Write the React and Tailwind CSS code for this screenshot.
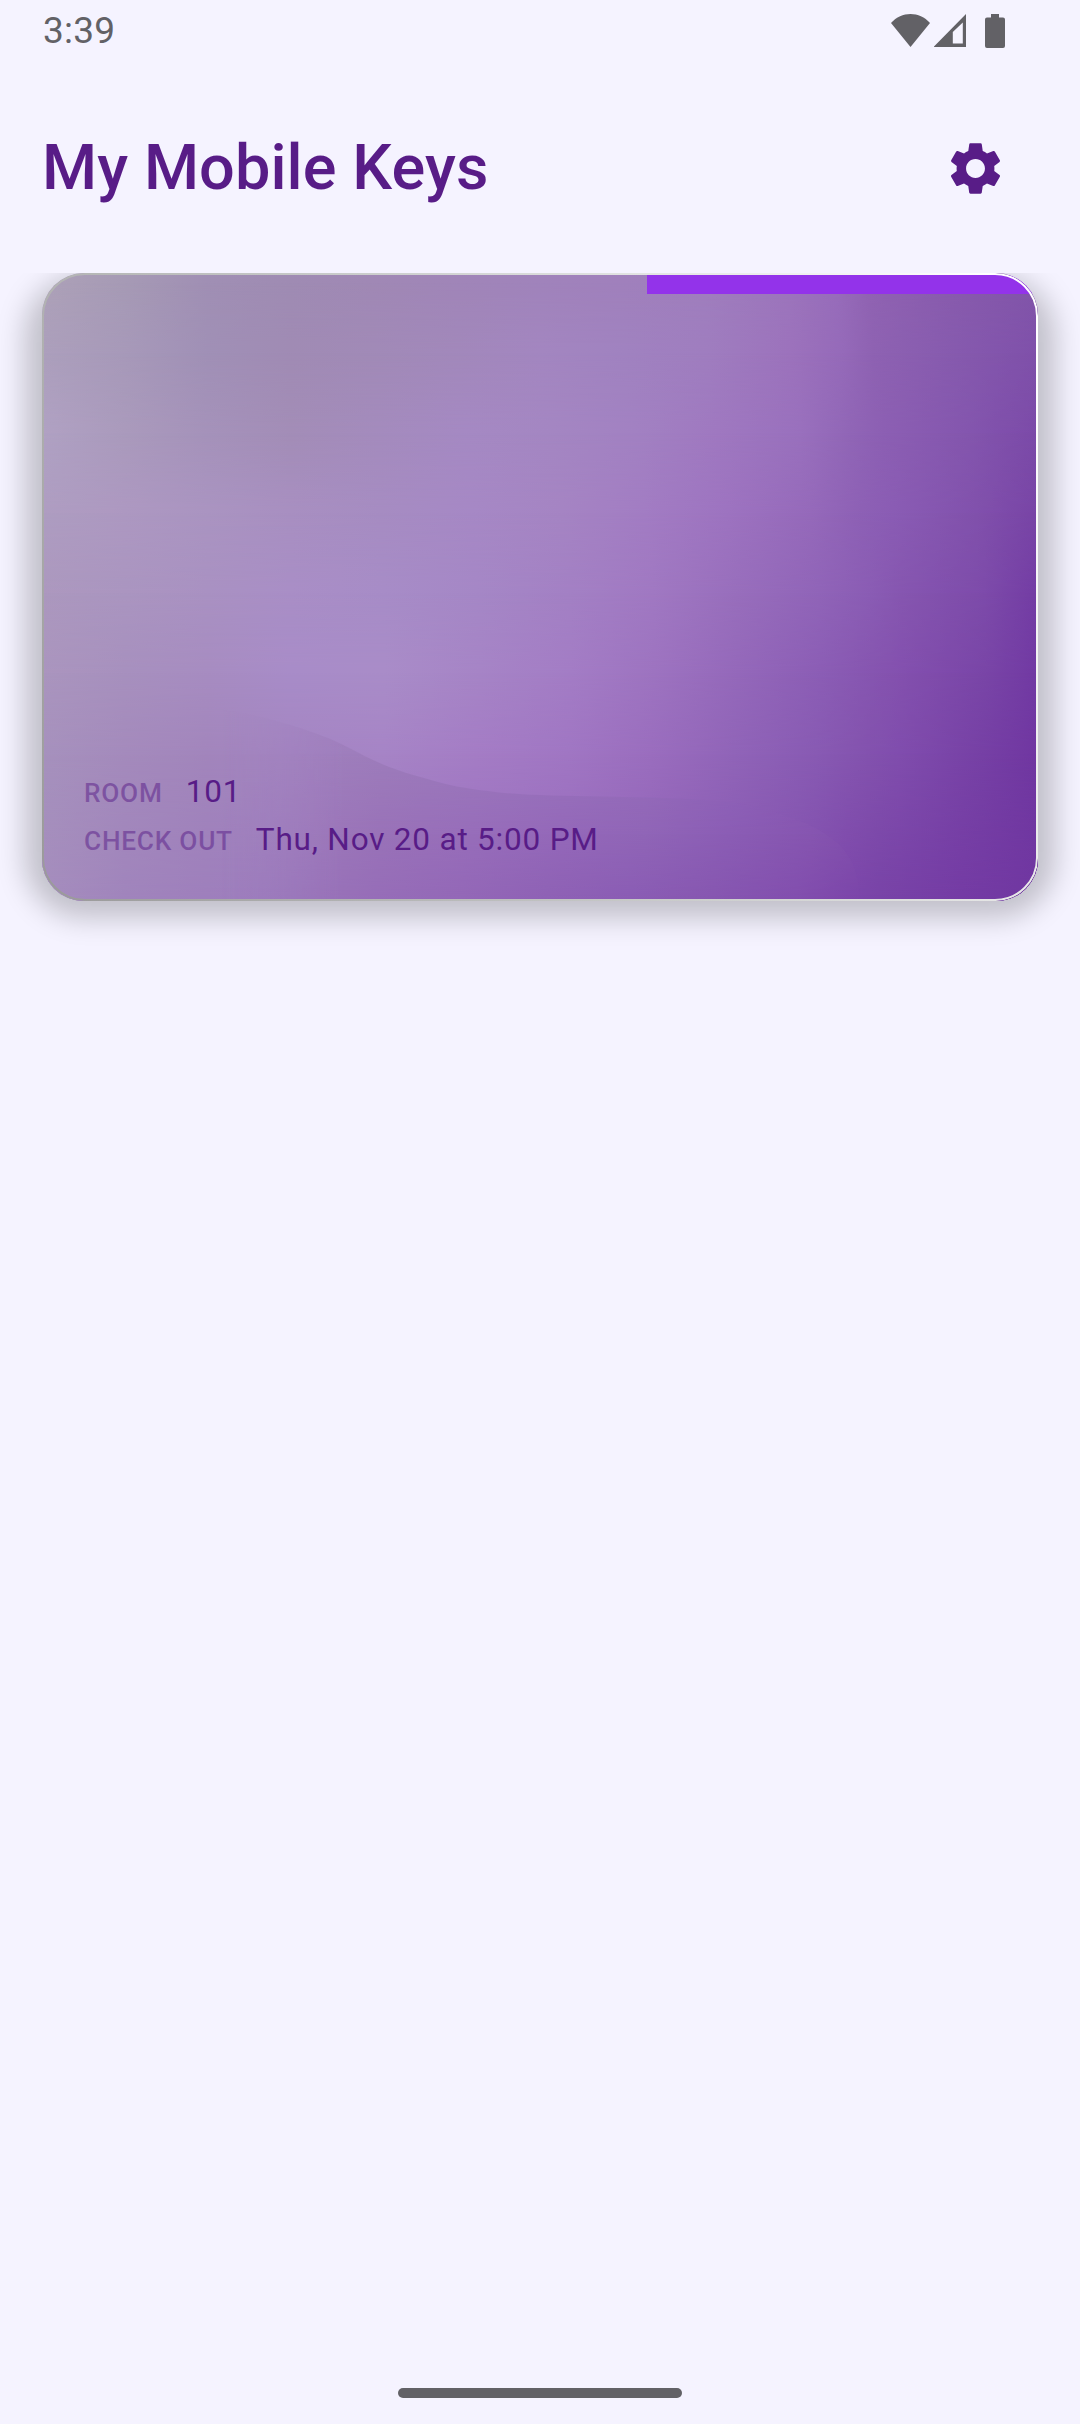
import { MdSettings } from "react-icons/md";

const COLS = [0, 83, 165, 248, 331, 414, 496, 579, 662, 745, 796, 827, 910, 996];

/* Each row: y, horizontal shift of the right-hand stops, colours. */
const UPPER = [
  [10, 0, ["#ada1b8", "#a69ab5", "#a08fb4", "#9f8bb3", "#a088b5", "#a085b8", "#a083bb", "#a080bc", "#9f7ebd", "#9c75bc", "#976cba", "#9063b2", "#885bad", "#8155a9"]],
  [80, 4, ["#ac9fbc", "#a799b9", "#a090b6", "#a08bb4", "#a18ab7", "#a288bb", "#a386c0", "#a082c0", "#9f7dbf", "#9c72bc", "#956ab9", "#8e62b2", "#865aae", "#7f50aa"]],
  [160, 14, ["#b0a1c3", "#aa9abc", "#a592ba", "#a38db7", "#a48bbd", "#a589c3", "#a486c2", "#a281c2", "#9f78c0", "#9970bd", "#9065b6", "#8c5fb3", "#8456ae", "#7b4aa8"]],
  [240, 24, ["#ae9dc1", "#ad98c1", "#aa94c1", "#a88fc1", "#a68cc2", "#a688c5", "#a584c3", "#a27cc3", "#9d73c0", "#9569ba", "#8d60b5", "#8a5cb4", "#8151ac", "#7844a6"]],
  [320, 32, ["#ac98be", "#aa95c0", "#a991c2", "#a98ec6", "#a78cc7", "#a587c6", "#a380c4", "#a078c2", "#986ebc", "#9064b8", "#8a5cb4", "#8656b0", "#7d4baa", "#733ca4"]],
  [400, 34, ["#aa95be", "#a790be", "#a78cc1", "#a88cc8", "#a98cc8", "#a684c6", "#a37cc5", "#9d73c0", "#9468ba", "#8b5db5", "#8655b0", "#8350ae", "#7945a7", "#7139a3"]],
  [481, 30, ["#a691bd", "#a48abc", "#a285bc", "#a485c2", "#a684c6", "#a47cc5", "#a076c3", "#9a6dbe", "#9064b8", "#885ab3", "#8352ae", "#804dad", "#7640a5", "#7036a1"]],
  [628, 10, ["#a58dbd", "#a084bc", "#9e7fbc", "#9d7cbf", "#9c76bf", "#9b70bf", "#986abd", "#9263b9", "#8a5ab3", "#8250ae", "#7c46aa", "#7843a7", "#743ba4", "#7037a1"]],
];

const LOWER = [
  [420, 30, ["#a994be", "#a68ebe", "#a589c0", "#a487c2", "#a080bf", "#9e7bbd", "#9b75bc", "#986fbb", "#9267b9", "#8b5db5", "#8655b0", "#8350ae", "#7945a7", "#7139a3"]],
  [481, 30, ["#a691bd", "#a48abc", "#a285bc", "#a080bd", "#9d7cbb", "#9b78bb", "#9873bb", "#966dba", "#8f64b8", "#885ab3", "#8352ae", "#804dad", "#7640a5", "#7036a1"]],
  [561, 24, ["#a58fbd", "#a286bb", "#a081bb", "#9d7aba", "#9972b8", "#976dba", "#9468b9", "#9065b7", "#8b5db5", "#8655b0", "#814eac", "#7b48a9", "#743ca5", "#7036a1"]],
  [628, 10, ["#a58dbd", "#a084bc", "#9e7fbc", "#9975b8", "#966db8", "#9367b7", "#8e61b5", "#8a5cb4", "#8656b0", "#824eae", "#7c46aa", "#7843a7", "#743ba4", "#7037a1"]],
];

const stopOffset = (k, shift) => {
  const weight = k === COLS.length - 1 ? 0 : Math.min(1, Math.max(0, (COLS[k] - 248) / 248));
  return (COLS[k] + shift * weight) / 996;
};

const WAVE =
  "M100 436 C150 434 185 436 210 442 C250 451 270 459 286 465 C305 473 318 481 331 487 C348 495 363 500 382 505 C405 512 425 516 446 518 C466 521 488 522 509 522.500 L605 524.500 C630 525 655 526 675 528 C697 530 716 534 732 539 C750 545 765 550 777 557 C790 565 799 572 805 581 C814 594 817 608 818 628 L100 628 Z";

/* A colour mesh: horizontal gradients that fade into one another from row to row. */
function Mesh({ id, rows }) {
  return (
    <g>
      <defs>
        {rows.map(([y, shift, colors], i) => {
          const from = i === 0 ? y - 1 : rows[i - 1][0];
          return (
            <g key={y}>
              <linearGradient id={`${id}-c${i}`} gradientUnits="userSpaceOnUse" x1="0" y1="0" x2="996" y2="0">
                {colors.map((c, k) => (
                  <stop key={k} offset={stopOffset(k, shift)} stopColor={c} />
                ))}
              </linearGradient>
              <linearGradient id={`${id}-f${i}`} gradientUnits="userSpaceOnUse" x1="0" y1={from} x2="0" y2={y}>
                <stop offset="0" stopColor="#fff" stopOpacity={i === 0 ? 1 : 0} />
                <stop offset="1" stopColor="#fff" />
              </linearGradient>
              <mask id={`${id}-m${i}`} maskUnits="userSpaceOnUse" x="0" y="0" width="996" height="628">
                <rect width="996" height="628" fill={`url(#${id}-f${i})`} />
              </mask>
            </g>
          );
        })}
      </defs>
      {rows.map(([y], i) => (
        <rect key={y} width="996" height="628" fill={`url(#${id}-c${i})`} mask={`url(#${id}-m${i})`} />
      ))}
    </g>
  );
}

function CardArt() {
  return (
    <svg className="absolute inset-0" width="996" height="628" viewBox="0 0 996 628">
      <defs>
        <linearGradient id="wave-fade" gradientUnits="userSpaceOnUse" x1="180" y1="0" x2="300" y2="0">
          <stop offset="0" stopColor="#fff" stopOpacity="0" />
          <stop offset="1" stopColor="#fff" />
        </linearGradient>
        <mask id="wave" maskUnits="userSpaceOnUse" x="0" y="0" width="996" height="628">
          <path d={WAVE} fill="url(#wave-fade)" />
        </mask>
        <linearGradient id="edge" gradientUnits="userSpaceOnUse" x1="0" y1="628" x2="1000" y2="103">
          <stop offset="0" stopColor="#999999" />
          <stop offset="0.5" stopColor="#cacccb" />
          <stop offset="1" stopColor="#ffffff" />
        </linearGradient>
      </defs>
      <Mesh id="upper" rows={UPPER} />
      <g mask="url(#wave)">
        <Mesh id="lower" rows={LOWER} />
      </g>
      <rect x="605" y="2" width="391" height="19" fill="#9333ea" />
      <rect x="1" y="1" width="994" height="626" rx="42" fill="none" stroke="url(#edge)" strokeWidth="2" />
    </svg>
  );
}

function StatusBar() {
  return (
    <div className="flex h-[62px] items-start justify-between pl-[43px] pr-[75px] text-[#626166]">
      <span className="text-[37px] leading-[62px] tracking-[0.2px]">3:39</span>
      <div className="flex items-start pt-3.5">
        <svg width="39" height="33" viewBox="0 0 39 33" fill="currentColor">
          <path d="M0 9C10.500 -3 28.500 -3 39 9L19.500 33Z" />
        </svg>
        <svg className="ml-1" width="32" height="33" viewBox="0 0 32 33" fill="currentColor">
          <path fillRule="evenodd" d="M32 0V33H-.5ZM28.800 8.500L18.800 18V29.600H28.800Z" />
        </svg>
        <svg className="ml-[19px]" width="20" height="34" viewBox="0 0 20 34" fill="currentColor">
          <path d="M6 0H14V3.500H18Q20 3.500 20 5.500V32Q20 34 18 34H2Q0 34 0 32V5.500Q0 3.500 2 3.500H6Z" />
        </svg>
      </div>
    </div>
  );
}

function Row({ label, value }) {
  return (
    <div className="flex h-12 items-baseline">
      <span className="text-[26.25px] font-medium leading-[48px] tracking-[0.75px] text-[#581c87]/50">{label}</span>
      <span className="ml-[23px] text-[31.5px] leading-[48px] tracking-[0.8px] text-[#581c87]">{value}</span>
    </div>
  );
}

export default function App() {
  return (
    <div className="flex h-[2424px] w-[1080px] flex-col overflow-hidden bg-[#f5f3ff] font-[Roboto,sans-serif]">
      <StatusBar />
      <header className="flex h-[211px] items-center justify-between pl-[42px] pr-[73px] pt-px">
        <h1 className="text-[63px] font-medium leading-[74px] tracking-[0.1px] text-[#581c87]">My Mobile Keys</h1>
        <MdSettings size={63} className="text-[#581c87]" />
      </header>
      <main className="grow overflow-hidden px-[42px]">
        <div className="relative">
          <div className="absolute inset-x-0 bottom-0 top-5 rounded-[42px] shadow-[0_0_28px_17px_rgba(0,0,0,0.21)]" />
          <section className="relative flex h-[628px] flex-col justify-end overflow-hidden rounded-[42px] px-[42px] pb-[37px]">
            <CardArt />
            <div className="relative flex flex-col">
              <Row label="ROOM" value="101" />
              <Row label="CHECK OUT" value="Thu, Nov 20 at 5:00 PM" />
            </div>
          </section>
        </div>
      </main>
      <div className="mx-auto mb-[26px] h-2.5 w-[284px] rounded-full bg-[#626166]" />
    </div>
  );
}
